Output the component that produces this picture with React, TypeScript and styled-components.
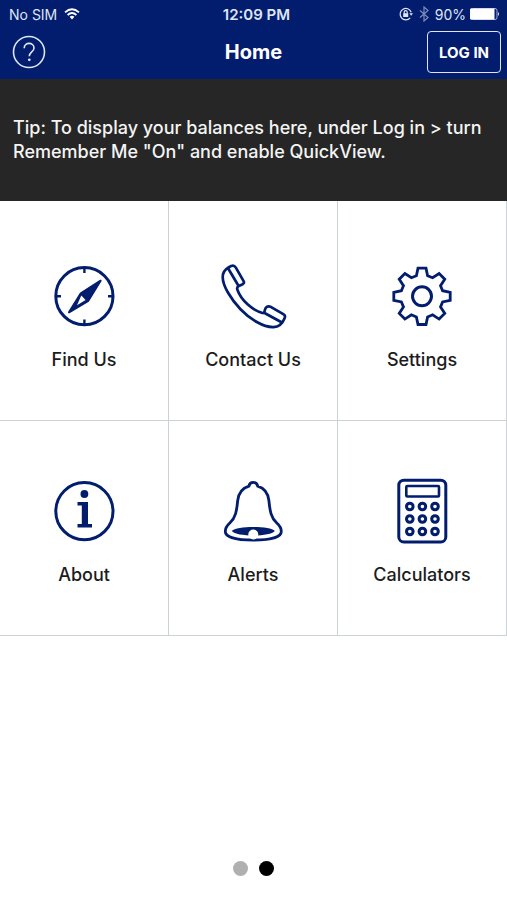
import React from "react";
import styled, { createGlobalStyle } from "styled-components";

const navy = "#021d6d";
const line = "#ccd2d6";

const GlobalStyle = createGlobalStyle`
  * { box-sizing: border-box; }
  body {
    margin: 0;
    background: #fff;
    color: #1c1c1c;
    font-family: Inter, "Liberation Sans", Arial, sans-serif;
  }
  button { font: inherit; color: inherit; cursor: pointer; }
`;

const Screen = styled.div`
  display: flex;
  flex-direction: column;
  min-height: 100vh;
`;

const Header = styled.header`
  background: ${navy};
  color: #fff;
`;

const StatusBar = styled.div`
  display: grid;
  grid-template-columns: 1fr auto 1fr;
  align-items: center;
  height: 28px;
  padding: 0 7px 0 9px;
  font-size: 14px;
  color: #dfe5f5;
`;

const StatusGroup = styled.div<{ $end?: boolean }>`
  display: flex;
  align-items: center;
  gap: ${(p) => (p.$end ? 4 : 7)}px;
  justify-content: ${(p) => (p.$end ? "flex-end" : "flex-start")};
`;

const Clock = styled.time`
  font-size: 15px;
  font-weight: 600;
  padding-left: 4px;
`;

const NavBar = styled.div`
  display: grid;
  grid-template-columns: 1fr auto 1fr;
  align-items: center;
  height: 51px;
  padding: 0 6px 3px 12px;
`;

const Title = styled.h1`
  margin: 0;
  font-size: 20px;
  font-weight: 700;
  line-height: 24px;
  padding-right: 6px;
`;

const HelpButton = styled.button`
  display: flex;
  justify-self: start;
  padding: 0;
  border: 0;
  background: none;
`;

const LoginButton = styled.button`
  justify-self: end;
  width: 74px;
  height: 42px;
  padding: 0;
  border: 1px solid #dfe5f5;
  border-radius: 4px;
  background: none;
  && {
    font-size: 15px;
    font-weight: 700;
  }
`;

const Tip = styled.p`
  margin: 0;
  min-height: 122px;
  padding: 37px 13px;
  background: #262626;
  color: #f4f4f4;
  font-size: 18px;
  font-weight: 500;
  line-height: 24px;
`;

const Tiles = styled.nav`
  display: grid;
  grid-template-columns: repeat(3, 1fr);
`;

const Tile = styled.button`
  display: flex;
  flex-direction: column;
  align-items: center;
  gap: 20px;
  padding: 58px 0 48px;
  border: solid ${line};
  border-width: 0 1px 1px 0;
  background: #fff;
  && {
    font-size: 18px;
    font-weight: 500;
    line-height: 24px;
  }
  &:nth-child(-n + 3) { padding-top: 63px; }
`;

const Pager = styled.div`
  display: flex;
  justify-content: center;
  gap: 11px;
  margin-top: auto;
  padding: 24px 0;
`;

const Dot = styled.button<{ $active?: boolean }>`
  width: 15px;
  height: 15px;
  padding: 0;
  border: 0;
  border-radius: 50%;
  background: ${(p) => (p.$active ? "#000" : "#b0b0b0")};
`;

const TileSvg = styled.svg`
  display: block;
  width: 64px;
  height: 64px;
  overflow: visible;
  fill: none;
  stroke: ${navy};
  stroke-width: 3;
  stroke-linejoin: round;
  stroke-linecap: round;
`;

const TileIcon = ({ children }: { children: React.ReactNode }) => (
  <TileSvg viewBox="0 0 64 64" aria-hidden="true">{children}</TileSvg>
);

const Compass = () => (
  <TileIcon>
    <circle cx="32.4" cy="32.2" r="28.6" />
    <path d="M32.4 4v5M32.4 55.5v5M4 32.2h5M56 32.2h5" strokeLinecap="butt" strokeWidth="2.4" />
    <path d="M48.6 16.7L28.8 29.3L17 48.3L36.3 36.8Z" fill={navy} strokeWidth="2" />
    <path d="M29.3 31.5L33.6 36L25 41.2Z" fill="#fff" stroke="none" />
  </TileIcon>
);

const Phone = () => (
  <TileIcon>
    <path
      strokeWidth="2.7"
      d="M7.5 3.5L10.3 1.9Q13 .7 14.7 3.4L22.6 17.2Q23.6 19.1 21.7 20.2L17.8 22Q15.4 23 16.5 26C20 36 31.5 46.5 41.5 49Q43.3 49.3 43.7 46.8Q44.9 41 49.7 42.8L62.3 50.2Q64.8 51.6 63.6 54.2C61.5 59.5 58 62.8 52.5 63.1C42.5 63.5 29 55.2 19.5 45.2C9.6 34.8 1.8 21.8 1.7 13.2Q1.7 6.8 7.5 3.5ZM7.5 5L17 21M44 49.2L60.5 58.2"
    />
  </TileIcon>
);

const gearPoints = Array.from({ length: 8 }, (_, tooth) => {
  const a = (tooth * Math.PI) / 4;
  return [[-5.6, -20.6], [-4, -28.2], [4, -28.2], [5.6, -20.6]]
    .map(([x, y]) => {
      const px = 32 + x * Math.cos(a) - y * Math.sin(a);
      const py = 32.3 + x * Math.sin(a) + y * Math.cos(a);
      return `${px.toFixed(2)},${py.toFixed(2)}`;
    })
    .join(" ");
}).join(" ");

const Gear = () => (
  <TileIcon>
    <polygon points={gearPoints} strokeWidth="2.8" strokeLinejoin="miter" />
    <circle cx="32" cy="32.3" r="9.5" />
  </TileIcon>
);

const Info = () => (
  <TileIcon>
    <circle cx="32.4" cy="32.2" r="28.6" />
    <g fill={navy} stroke="none">
      <circle cx="32.4" cy="15" r="3.9" />
      <path d="M25.5 23H36V45H40V48.5H25.5V45H29.8V26.5H25.5Z" />
    </g>
  </TileIcon>
);

const Bell = () => (
  <TileIcon>
    <path
      strokeWidth="2.8"
      d="M27.9 7.2C28.7 2.2 35.9 2.2 36.7 7.2C43.3 9.2 47 14.3 47.9 21.5C48.9 32 50.1 39 55.8 44C58.6 46.5 60.3 49 60.3 52.4C60.3 57.8 49.8 61 32.3 61C14.8 61 4.3 57.8 4.3 52.4C4.3 49 6 46.5 8.8 44C14.5 39 15.7 32 16.7 21.5C17.6 14.3 21.3 9.2 27.9 7.2Z"
    />
    <path stroke="none" fill={navy} d="M10.8 52C15.3 46.8 49.3 46.8 53.8 52C49.3 58 15.3 58 10.8 52Z" />
    <circle cx="32.3" cy="55.5" r="5" fill="#fff" stroke="none" />
  </TileIcon>
);

const Calculator = () => (
  <TileIcon>
    <rect x="8.8" y="1.2" width="47" height="61.8" rx="5" />
    <rect x="16.3" y="7" width="32.7" height="10.5" rx="1" strokeWidth="2.6" />
    {[27.5, 40, 52.5].map((y) =>
      [19.8, 32.4, 45].map((x) => <circle key={`${x}-${y}`} cx={x} cy={y} r="3.3" strokeWidth="3" />)
    )}
  </TileIcon>
);

const items = [
  { label: "Find Us", Icon: Compass },
  { label: "Contact Us", Icon: Phone },
  { label: "Settings", Icon: Gear },
  { label: "About", Icon: Info },
  { label: "Alerts", Icon: Bell },
  { label: "Calculators", Icon: Calculator },
];

const Wifi = () => (
  <svg width="16" height="12" viewBox="0 0 16 12" fill="none" stroke="#fff" strokeWidth="1.8" aria-hidden="true">
    <path d="M1 4.4Q8-2 15 4.4M3.6 7Q8 3 12.4 7" />
    <path d="M5.6 8.8Q8 6.8 10.4 8.8L8 11.4Z" fill="#fff" stroke="none" />
  </svg>
);

const RotationLock = () => (
  <svg width="14" height="14" viewBox="0 0 14 14" fill="none" stroke="#dfe5f5" strokeWidth="1.2" aria-hidden="true">
    <path d="M11.2 10.8A5.7 5.7 0 1 1 12.2 5.2" />
    <path d="M10.4 6.2H14L12.2 8.8Z" fill="#dfe5f5" stroke="none" />
    <rect x="4.2" y="6.2" width="5" height="3.8" fill="#dfe5f5" stroke="none" />
    <path d="M5.2 6.4V5.2a1.5 1.5 0 0 1 3 0V6.4" />
  </svg>
);

const Bluetooth = () => (
  <svg width="14" height="16" viewBox="-2 0 14 16" fill="none" stroke="#7e8dba" strokeWidth="1.2" aria-hidden="true">
    <path d="M1 4.5L9 11.5L5 15V1L9 4.5L1 11.5" />
  </svg>
);

const Battery = () => (
  <svg width="30" height="12" viewBox="0 0 30 12" aria-hidden="true">
    <rect x=".5" y=".5" width="26.5" height="11" rx="2" fill="none" stroke="#a8b4d8" />
    <rect x="0" y=".5" width="24.5" height="11" rx="1" fill="#fff" />
    <path d="M28 4Q30 6 28 8Z" fill="#dfe5f5" />
  </svg>
);

const Help = () => (
  <svg width="34" height="34" viewBox="0 0 34 34" fill="none" stroke="#dfe5f5" strokeWidth="1.6" aria-hidden="true">
    <circle cx="17" cy="17" r="15.5" />
    <path d="M12.2 13.2C12.2 6.7 22 6.9 22 12.9C22 17 17.3 16.8 17.3 21.3" />
    <circle cx="17.3" cy="24.8" r="1.4" fill="#dfe5f5" stroke="none" />
  </svg>
);

export default function App() {
  return (
    <>
      <GlobalStyle />
      <Screen>
        <Header>
          <StatusBar>
            <StatusGroup><span>No SIM</span><Wifi /></StatusGroup>
            <Clock>12:09 PM</Clock>
            <StatusGroup $end><RotationLock /><Bluetooth /><span>90%</span><Battery /></StatusGroup>
          </StatusBar>
          <NavBar>
            <HelpButton type="button" aria-label="Help"><Help /></HelpButton>
            <Title>Home</Title>
            <LoginButton type="button">LOG IN</LoginButton>
          </NavBar>
        </Header>
        <Tip>Tip: To display your balances here, under Log in &gt; turn Remember Me "On" and enable QuickView.</Tip>
        <Tiles aria-label="Main menu">
          {items.map(({ label, Icon }) => (
            <Tile type="button" key={label}><Icon /><span>{label}</span></Tile>
          ))}
        </Tiles>
        <Pager>
          <Dot type="button" aria-label="Page 1" />
          <Dot type="button" aria-label="Page 2" aria-current="page" $active />
        </Pager>
      </Screen>
    </>
  );
}
